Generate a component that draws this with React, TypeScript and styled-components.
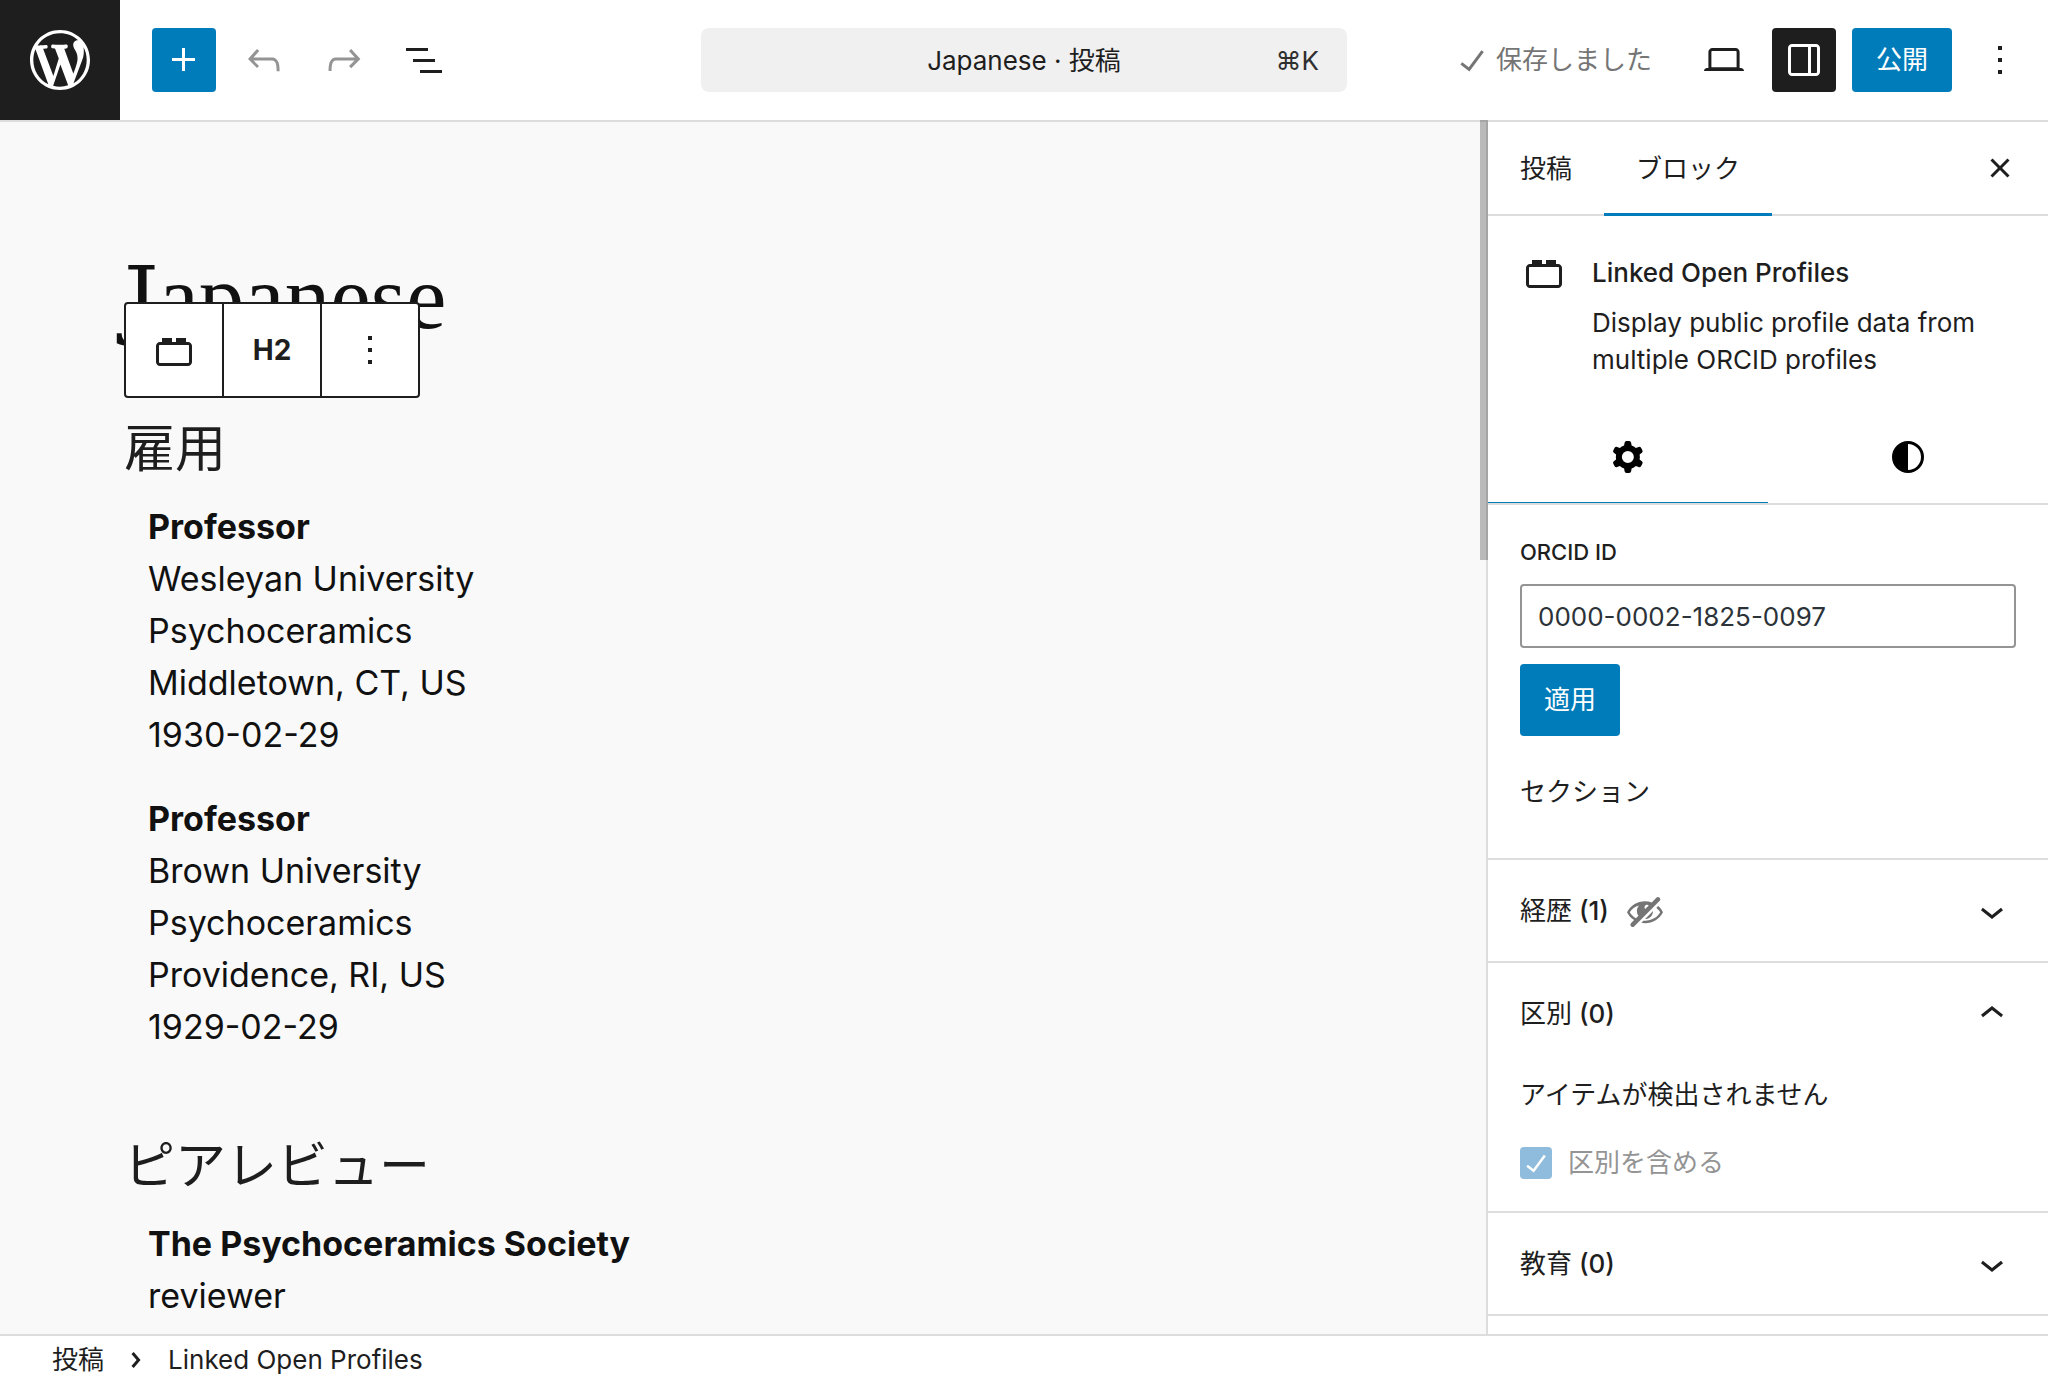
import React, { useState } from "react";
import styled, { createGlobalStyle, css } from "styled-components";

const ui = `Inter, "Noto Sans CJK JP", sans-serif`;
const serif = `"Liberation Serif", "Noto Sans CJK JP", serif`;
const ink = "#1e1e1e";
const accent = "#007cba";
const line = "#dddddd";

const GlobalStyle = createGlobalStyle`
  *, *::before, *::after { box-sizing: border-box; }
  body { margin: 0; background: #fff; }
  button, input { font: inherit; color: inherit; }
  h1, h2, h3, p, ul, ol { margin: 0; padding: 0; font-weight: inherit; font-size: inherit; }
  ul, ol { list-style: none; }
`;

/* Icons */

const paths = {
  wordpress:
    "M20 10c0-5.51-4.49-10-10-10C4.48 0 0 4.49 0 10c0 5.52 4.48 10 10 10 5.51 0 10-4.48 10-10zM7.78 15.37L4.37 6.22c.55-.02 1.17-.08 1.17-.08.5-.06.44-1.13-.06-1.11 0 0-1.45.11-2.37.11-.18 0-.37 0-.58-.01C4.12 2.69 6.87 1.11 10 1.11c2.33 0 4.45.87 6.05 2.34-.68-.11-1.65.39-1.65 1.58 0 .74.45 1.36.9 2.1.35.61.55 1.36.55 2.46 0 1.49-1.4 5-1.4 5l-3.03-8.37c.54-.02.82-.17.82-.17.5-.05.44-1.25-.06-1.22 0 0-1.44.12-2.38.12-.87 0-2.33-.12-2.33-.12-.5-.03-.56 1.2-.06 1.22l.92.08 1.26 3.41zM17.41 10c.24-.64.74-1.87.43-4.25.7 1.29 1.05 2.71 1.05 4.25 0 3.29-1.73 6.24-4.4 7.78.97-2.59 1.94-5.2 2.92-7.78zM6.1 18.09C3.12 16.65 1.11 13.53 1.11 10c0-1.3.23-2.48.72-3.59C3.25 10.3 4.67 14.2 6.1 18.09zm4.03-6.63l2.58 6.98c-.86.29-1.76.45-2.71.45-.79 0-1.57-.11-2.29-.33.81-2.38 1.62-4.74 2.42-7.1z",
  plus: "M11 12.5V17.5H12.5V12.5H17.5V11H12.5V6H11V11H6V12.5H11Z",
  undo: "M18.3 11.7c-.6-.6-1.4-.9-2.3-.9H6.7l2.9-3.3-1.1-1-4.5 5L8.5 16l1-1-2.7-2.7H16c.5 0 .9.2 1.3.5 1 1 1 3.4 1 4.5v.3h1.5v-.2c0-1.5 0-4.3-1.5-5.7z",
  redo: "M15.6 6.5l-1.1 1 2.9 3.3H8c-.9 0-1.7.3-2.3.9-1.4 1.5-1.4 4.2-1.4 5.6v.2h1.5v-.3c0-1.1 0-3.5 1-4.5.3-.3.7-.5 1.3-.5h9.2L14.5 15l1.1 1.1 4.6-4.6-4.6-5z",
  listView: "M3 6h11v1.5H3V6Zm3.5 5.5h11V13h-11v-1.5ZM21 17H10v1.5h11V17Z",
  check: "M16.7 7.1l-6.3 8.5-3.3-2.5-.9 1.2 4.5 3.4L17.9 8z",
  laptop:
    "M20.5 16h-.7V8c0-1.1-.9-2-2-2H6.2c-1.1 0-2 .9-2 2v8h-.7c-.8 0-1.5.7-1.5 1.5h20c0-.8-.7-1.5-1.5-1.5zM5.7 8c0-.3.2-.5.5-.5h11.6c.3 0 .5.2.5.5v7.6H5.7V8z",
  drawer:
    "M18 4H6c-1.1 0-2 .9-2 2v12c0 1.1.9 2 2 2h12c1.1 0 2-.9 2-2V6c0-1.1-.9-2-2-2zm-4 14.5H6c-.3 0-.5-.2-.5-.5V6c0-.3.2-.5.5-.5h8v13zm4.5-.5c0 .3-.2.5-.5.5h-2.5v-13H18c.3 0 .5.2.5.5v12z",
  more: "M13 19h-2v-2h2v2zm0-6h-2v-2h2v2zm0-6h-2V5h2v2z",
  close:
    "M12 13.06l3.712 3.713 1.061-1.06L13.061 12l3.712-3.712-1.06-1.06L12 10.938 8.288 7.227l-1.061 1.06L10.939 12l-3.712 3.712 1.06 1.061L12 13.061z",
  block:
    "M19 8h-1V6h-5v2h-2V6H6v2H5c-1.1 0-2 .9-2 2v8c0 1.1.9 2 2 2h14c1.1 0 2-.9 2-2v-8c0-1.1-.9-2-2-2zm.5 10c0 .3-.2.5-.5.5H5c-.3 0-.5-.2-.5-.5v-8c0-.3.2-.5.5-.5h14c.3 0 .5.2.5.5v8z",
  cog: "M10.289 4.836A1 1 0 0111.275 4h1.306a1 1 0 01.987.836l.244 1.466c.787.26 1.503.679 2.108 1.218l1.393-.522a1 1 0 011.216.437l.653 1.13a1 1 0 01-.23 1.273l-1.148.944a6.025 6.025 0 010 2.435l1.149.946a1 1 0 01.23 1.272l-.653 1.13a1 1 0 01-1.216.437l-1.394-.522c-.605.54-1.32.958-2.108 1.218l-.244 1.466a1 1 0 01-.987.836h-1.306a1 1 0 01-.986-.836l-.244-1.466a5.995 5.995 0 01-2.108-1.218l-1.394.522a1 1 0 01-1.217-.436l-.653-1.131a1 1 0 01.23-1.272l1.149-.946a6.026 6.026 0 010-2.435l-1.148-.944a1 1 0 01-.23-1.272l.653-1.131a1 1 0 011.217-.437l1.393.522a5.994 5.994 0 012.108-1.218l.244-1.466zM14.929 12a3 3 0 11-6 0 3 3 0 016 0z",
  styles:
    "M20 12a8 8 0 1 1-16 0 8 8 0 0 1 16 0Zm-1.5 0a6.5 6.5 0 0 1-6.5 6.5v-13a6.5 6.5 0 0 1 6.5 6.5Z",
  chevronDown: "M17.5 11.6L12 16l-5.5-4.4.9-1.2L12 14l4.5-3.6 1 1.2z",
  chevronUp: "M6.5 12.4L12 8l5.5 4.4-.9 1.2L12 10l-4.5 3.6-1-1.2z",
  chevronRight:
    "M10.862 8.04L14.28 12.029l-3.418 3.988-1.139-.977 2.582-3.011-2.582-3.012 1.139-.977z",
  hidden:
    "M17.2 3.3l.16.17c.39.39.39 1.02 0 1.41L4.55 17.7c-.39.39-1.03.39-1.41 0l-.17-.17c-.39-.39-.39-1.02 0-1.41l1.59-1.6c-1.57-1-2.76-2.3-3.56-3.93.81-1.65 2.03-2.98 3.64-3.99S8.04 5.09 10 5.09c1.2 0 2.33.21 3.4.6l2.38-2.39c.39-.39 1.03-.39 1.42 0zm-7.09 4.01c-.23.25-.34.54-.34.88 0 .31.12.58.31.81l1.8-1.79c-.13-.12-.28-.21-.45-.26-.11-.01-.28-.03-.49-.04-.33.03-.6.16-.83.4zM2.4 10.59c.69 1.23 1.71 2.25 3.05 3.05l1.28-1.28c-.51-.69-.77-1.47-.77-2.36 0-1.06.36-1.98 1.09-2.76-1.04.27-1.96.7-2.76 1.26-.8.58-1.43 1.27-1.89 2.09zm13.22-2.13l.96-1.02c1.02.83 1.83 1.89 2.42 3.15-.81 1.65-2.03 2.98-3.64 3.99s-3.4 1.51-5.36 1.51c-.63 0-1.24-.07-1.83-.18l1.07-1.07c.25.02.5.05.76.05 1.63 0 3.13-.4 4.5-1.21s2.4-1.84 3.1-3.09c-.46-.82-1.09-1.51-1.89-2.09-.03-.01-.06-.03-.09-.04zm-5.58 5.58l4-4c-.01 1.1-.41 2.04-1.18 2.81-.78.78-1.72 1.18-2.82 1.19z",
};

type IconProps = { name: keyof typeof paths; size?: number; viewBox?: string };

const Svg = styled.svg`
  display: block;
  flex: none;
  fill: currentColor;
`;

const evenOdd = ["drawer", "cog", "styles"];

const Icon = ({ name, size = 48, viewBox = "0 0 24 24" }: IconProps) => (
  <Svg width={size} height={size} viewBox={viewBox} aria-hidden="true">
    <path d={paths[name]} fillRule={evenOdd.includes(name) ? "evenodd" : "nonzero"} />
  </Svg>
);

/* Frame */

const Frame = styled.div`
  display: grid;
  grid-template-rows: auto minmax(0, 1fr) auto;
  height: 100vh;
  color: ${ink};
  font: 400 26px/36px ${ui};
`;

const Header = styled.header`
  display: grid;
  grid-template-columns: minmax(0, 1fr) minmax(0, 646px) minmax(0, 1fr);
  align-items: center;
  border-bottom: 2px solid ${line};
`;

const HeaderTools = styled.div`
  display: flex;
  align-items: center;
  gap: 16px;
`;

const HeaderSettings = styled(HeaderTools)`
  justify-content: flex-end;
  padding-right: 16px;
`;

const SiteLink = styled.a`
  display: grid;
  place-items: center;
  width: 120px;
  height: 120px;
  margin-right: 16px;
  background: ${ink};
  color: #fff;
`;

const Button = styled.button<{ $tone?: "primary" | "pressed" | "plain" }>`
  display: inline-flex;
  align-items: center;
  justify-content: center;
  flex: none;
  min-width: 64px;
  height: 64px;
  padding: 0;
  border: 0;
  border-radius: 4px;
  background: transparent;
  white-space: nowrap;
  cursor: pointer;
  ${({ $tone }) => $tone === "primary" && css`background: ${accent}; color: #fff;`}
  ${({ $tone }) => $tone === "pressed" && css`background: ${ink}; color: #fff;`}
  &:disabled { color: #949494; cursor: default; }
`;

const TextButton = styled(Button)<{ $tall?: boolean }>`
  padding: 0 24px;
  height: ${({ $tall }) => ($tall ? 72 : 64)}px;
`;

const SavedButton = styled(Button)`
  padding-right: 24px;
  &:disabled { color: #757575; }
`;

const CommandBar = styled.button`
  display: grid;
  grid-template-columns: 1fr auto 1fr;
  align-items: center;
  height: 64px;
  padding: 2px 28px 0;
  border: 0;
  border-radius: 8px;
  background: #f0f0f0;
  cursor: pointer;
`;

const CommandTitle = styled.span`
  grid-column: 2;
`;

const Shortcut = styled.span`
  justify-self: end;
  color: #2f2f2f;
`;

const Main = styled.div`
  display: grid;
  grid-template-columns: minmax(0, 1fr) 562px;
`;

/* Canvas */

const Canvas = styled.main`
  position: relative;
  overflow: hidden;
  padding: 124px 124px 0;
  background: #f9f9f9;
  color: #111;
`;

const Title = styled.h1`
  margin-bottom: 70px;
  font: 400 91px/104px ${serif};
  &::first-letter { font-family: "DejaVu Serif", serif; font-size: 86px; line-height: 1; }
`;

const Section = styled.section`
  & + & { margin-top: 84px; }
`;

const SectionTitle = styled.h2`
  margin-bottom: 21px;
  color: ${ink};
  font: 400 51px/60px ${serif};
`;

const Entries = styled.ul`
  display: flex;
  flex-direction: column;
  gap: 32px;
  padding-left: 24px;
  font-size: 34px;
  line-height: 52px;
`;

const EntryTitle = styled.h3`
  font-weight: 700;
`;

const BlockToolbar = styled.div`
  position: absolute;
  top: 180px;
  left: 124px;
  display: flex;
  border: 2px solid ${ink};
  border-radius: 4px;
  background: #fff;
  color: ${ink};
`;

const ToolbarButton = styled.button`
  display: grid;
  place-items: center;
  width: 96px;
  height: 92px;
  padding: 0;
  border: 0;
  background: transparent;
  font-size: 28px;
  font-weight: 700;
  cursor: pointer;
  & + & { width: 98px; border-left: 2px solid ${ink}; }
`;

const ScrollThumb = styled.div`
  position: absolute;
  top: -2px;
  left: -8px;
  width: 8px;
  height: 440px;
  background: rgba(0, 0, 0, 0.25);
`;

/* Sidebar */

const Sidebar = styled.aside`
  position: relative;
  border-left: 2px solid ${line};
  background: #fff;
`;

const SidebarScroll = styled.div`
  height: 100%;
  overflow: hidden;
`;

const SidebarHeader = styled.div`
  display: flex;
  align-items: center;
  padding-right: 16px;
  border-bottom: 2px solid ${line};
`;

const Tab = styled.button<{ $active?: boolean }>`
  height: 94px;
  margin-bottom: -2px;
  padding: 0 32px;
  border: 0;
  background: transparent;
  box-shadow: ${({ $active }) => ($active ? `inset 0 -3px ${accent}` : "none")};
  cursor: pointer;
`;

const CloseButton = styled(Button)`
  margin-left: auto;
`;

const TabList = styled.div`
  display: flex;
`;

const BlockCard = styled.div`
  display: flex;
  gap: 24px;
  padding: 32px;
`;

const BlockName = styled.h2`
  margin-bottom: 6px;
  font-weight: 500;
  line-height: 50px;
`;

const BlockDescription = styled.p`
  line-height: 37px;
`;

const IconTabs = styled.div`
  display: grid;
  grid-template-columns: 1fr 1fr;
  border-bottom: 2px solid ${line};
  color: #000;
`;

const IconTab = styled.button<{ $active?: boolean }>`
  display: grid;
  place-items: center;
  height: 93px;
  padding: 0;
  border: 0;
  background: transparent;
  box-shadow: ${({ $active }) => ($active ? `inset 0 -1px ${accent}` : "none")};
  cursor: pointer;
`;

const Settings = styled.form`
  display: flex;
  flex-direction: column;
  align-items: flex-start;
  padding: 31px 32px 48px;
`;

const FieldLabel = styled.label`
  margin-bottom: 16px;
  font-size: 22px;
  font-weight: 500;
  line-height: 32px;
`;

const TextField = styled.input`
  width: 100%;
  height: 64px;
  margin-bottom: 16px;
  padding: 0 16px;
  border: 2px solid #949494;
  border-radius: 4px;
  background: #fff;
  color: #2c3338;
`;

const SectionsLabel = styled.p`
  margin-top: 38px;
`;

const Panel = styled.section`
  border-top: 2px solid ${line};
`;

const PanelToggle = styled.button`
  display: flex;
  align-items: center;
  width: 100%;
  height: 101px;
  padding: 0 32px;
  border: 0;
  background: transparent;
  font-weight: 500;
  text-align: left;
  cursor: pointer;
`;

const PanelLabel = styled.span`
  margin-right: 16px;
  white-space: nowrap;
`;

const Kanji = styled.span`
  font-weight: 400;
`;

const PanelState = styled.span`
  color: #757575;
`;

const PanelChevron = styled.span`
  margin-left: auto;
`;

const PanelBody = styled.div`
  padding: 13px 32px 30px;
`;

const CheckRow = styled.label`
  display: flex;
  align-items: center;
  gap: 16px;
  margin-top: 32px;
  color: #949494;
`;

const CheckHolder = styled.span`
  position: relative;
  width: 32px;
  height: 32px;
  color: #fff;
`;

const CheckBox = styled.input`
  display: block;
  appearance: none;
  width: 32px;
  height: 32px;
  margin: 0;
  border-radius: 4px;
  background: #8fbcdc;
`;

const CheckMark = styled.span`
  position: absolute;
  inset: -4px;
  pointer-events: none;
`;

/* Footer */

const Footer = styled.footer`
  border-top: 2px solid ${line};
  background: #fff;
`;

const Crumbs = styled.ol`
  display: flex;
  align-items: center;
  height: 48px;
  padding-left: 44px;
`;

const Crumb = styled.li`
  display: flex;
  align-items: center;
`;

const CrumbButton = styled.button`
  padding: 0 8px;
  border: 0;
  background: transparent;
  cursor: pointer;
`;

const CrumbCurrent = styled.span`
  padding: 0 8px;
`;

const employment = [
  { title: "Professor", lines: ["Wesleyan University", "Psychoceramics", "Middletown, CT, US", "1930-02-29"] },
  { title: "Professor", lines: ["Brown University", "Psychoceramics", "Providence, RI, US", "1929-02-29"] },
];
const reviews = [{ title: "The Psychoceramics Society", lines: ["reviewer"] }];

const EntryList = ({ items }: { items: typeof employment }) => (
  <Entries>
    {items.map((item, i) => (
      <li key={i}>
        <EntryTitle>{item.title}</EntryTitle>
        {item.lines.map((text) => (
          <p key={text}>{text}</p>
        ))}
      </li>
    ))}
  </Entries>
);

type SectionPanelProps = {
  label: string;
  count: number;
  hidden?: boolean;
  initialOpen?: boolean;
};

const SectionPanel = ({ label, count, hidden, initialOpen = false }: SectionPanelProps) => {
  const [open, setOpen] = useState(initialOpen);
  return (
    <Panel>
      <PanelToggle type="button" aria-expanded={open} onClick={() => setOpen(!open)}>
        <PanelLabel>
          <Kanji>{label}</Kanji> ({count})
        </PanelLabel>
        {hidden && (
          <PanelState>
            <Icon name="hidden" size={40} viewBox="0 0 20 20" />
          </PanelState>
        )}
        <PanelChevron>
          <Icon name={open ? "chevronUp" : "chevronDown"} />
        </PanelChevron>
      </PanelToggle>
      {open && (
        <PanelBody>
          <p>アイテムが検出されません</p>
          <CheckRow>
            <CheckHolder>
              <CheckBox type="checkbox" defaultChecked disabled />
              <CheckMark>
                <Icon name="check" size={40} />
              </CheckMark>
            </CheckHolder>
            {label}を含める
          </CheckRow>
        </PanelBody>
      )}
    </Panel>
  );
};

export default function App() {
  const [orcid, setOrcid] = useState("0000-0002-1825-0097");
  return (
    <Frame lang="ja">
      <GlobalStyle />
      <Header>
        <HeaderTools>
          <SiteLink href="#" aria-label="WordPress">
            <Icon name="wordpress" size={72} viewBox="-2 -2 24 24" />
          </SiteLink>
          <Button $tone="primary" aria-label="追加"><Icon name="plus" /></Button>
          <Button disabled aria-label="元に戻す"><Icon name="undo" /></Button>
          <Button disabled aria-label="やり直す"><Icon name="redo" /></Button>
          <Button aria-label="リスト表示"><Icon name="listView" /></Button>
        </HeaderTools>
        <CommandBar>
          <CommandTitle>Japanese · 投稿</CommandTitle>
          <Shortcut>⌘K</Shortcut>
        </CommandBar>
        <HeaderSettings>
          <SavedButton disabled><Icon name="check" />保存しました</SavedButton>
          <Button aria-label="表示"><Icon name="laptop" /></Button>
          <Button $tone="pressed" aria-label="設定" aria-pressed="true"><Icon name="drawer" /></Button>
          <TextButton $tone="primary">公開</TextButton>
          <Button aria-label="オプション"><Icon name="more" /></Button>
        </HeaderSettings>
      </Header>

      <Main>
        <Canvas>
          <Title>Japanese</Title>
          <Section>
            <SectionTitle>雇用</SectionTitle>
            <EntryList items={employment} />
          </Section>
          <Section>
            <SectionTitle>ピアレビュー</SectionTitle>
            <EntryList items={reviews} />
          </Section>
          <BlockToolbar role="toolbar">
            <ToolbarButton aria-label="Linked Open Profiles"><Icon name="block" /></ToolbarButton>
            <ToolbarButton>H2</ToolbarButton>
            <ToolbarButton aria-label="オプション"><Icon name="more" /></ToolbarButton>
          </BlockToolbar>
        </Canvas>

        <Sidebar>
          <SidebarScroll>
            <SidebarHeader>
              <TabList role="tablist">
                <Tab role="tab">投稿</Tab>
                <Tab role="tab" aria-selected="true" $active>ブロック</Tab>
              </TabList>
              <CloseButton aria-label="閉じる"><Icon name="close" /></CloseButton>
            </SidebarHeader>
            <BlockCard>
              <Icon name="block" />
              <div>
                <BlockName>Linked Open Profiles</BlockName>
                <BlockDescription>Display public profile data from multiple ORCID profiles</BlockDescription>
              </div>
            </BlockCard>
            <IconTabs role="tablist">
              <IconTab role="tab" aria-selected="true" aria-label="設定" $active><Icon name="cog" /></IconTab>
              <IconTab role="tab" aria-label="スタイル"><Icon name="styles" /></IconTab>
            </IconTabs>
            <Settings onSubmit={(e) => e.preventDefault()}>
              <FieldLabel htmlFor="orcid">ORCID ID</FieldLabel>
              <TextField id="orcid" type="text" value={orcid} onChange={(e) => setOrcid(e.target.value)} />
              <TextButton type="submit" $tone="primary" $tall>適用</TextButton>
              <SectionsLabel>セクション</SectionsLabel>
            </Settings>
            <SectionPanel label="経歴" count={1} hidden />
            <SectionPanel label="区別" count={0} initialOpen />
            <SectionPanel label="教育" count={0} />
            <Panel />
          </SidebarScroll>
          <ScrollThumb />
        </Sidebar>
      </Main>

      <Footer>
        <Crumbs>
          <Crumb>
            <CrumbButton>投稿</CrumbButton>
            <Icon name="chevronRight" />
          </Crumb>
          <Crumb aria-current="true">
            <CrumbCurrent>Linked Open Profiles</CrumbCurrent>
          </Crumb>
        </Crumbs>
      </Footer>
    </Frame>
  );
}
